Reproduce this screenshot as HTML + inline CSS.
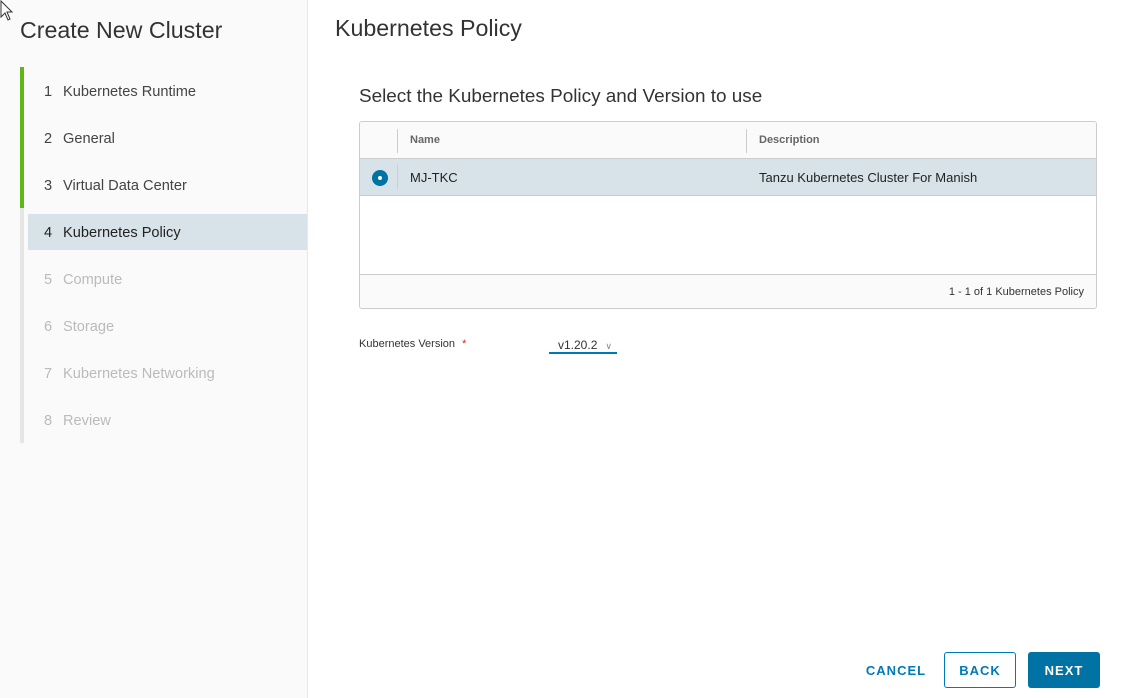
<!DOCTYPE html>
<html><head><style>
body{margin:0;width:1141px;height:698px;background:#fff;font-family:"Liberation Sans",sans-serif;position:relative;overflow:hidden;color:#333}
.side{position:absolute;left:0;top:0;width:307px;height:698px;background:#fafafa;border-right:1px solid #e8e8e8}
.abs{position:absolute}
.step{position:absolute;left:44px;font-size:14.6px;color:#444}
.step b{font-weight:normal;display:inline-block;width:19px}
.dis{color:#bbb}
.btn{position:absolute;top:652px;height:36px;font-size:13px;letter-spacing:1px;font-weight:bold;display:flex;align-items:center;justify-content:center;box-sizing:border-box}
</style></head><body>
<div class="side">
<svg class="abs" style="left:0;top:0" width="14" height="22" viewBox="0 0 14 22"><path d="M1 1 L1 17 L5 13 L8 20 L10 19 L7 12 L12 12 Z" fill="#fff" stroke="#333" stroke-width="1"/></svg>
<div class="abs" style="left:20px;top:17px;font-size:23.2px;color:#333">Create New Cluster</div>
<div class="abs" style="left:20px;top:67px;width:4px;height:141px;background:#5eb715"></div>
<div class="abs" style="left:20px;top:208px;width:4px;height:235px;background:#e5e5e5"></div>
<div class="abs" style="left:28px;top:214px;width:279px;height:36px;background:#d8e3e9"></div>
<div class="step" style="top:84px"><b>1</b>Kubernetes Runtime</div>
<div class="step" style="top:131px"><b>2</b>General</div>
<div class="step" style="top:178px"><b>3</b>Virtual Data Center</div>
<div class="step" style="top:225px;color:#222"><b>4</b>Kubernetes Policy</div>
<div class="step dis" style="top:272px"><b>5</b>Compute</div>
<div class="step dis" style="top:319px"><b>6</b>Storage</div>
<div class="step dis" style="top:366px"><b>7</b>Kubernetes Networking</div>
<div class="step dis" style="top:413px"><b>8</b>Review</div>
</div>
<div class="abs" style="left:335px;top:15px;font-size:23.2px;color:#333">Kubernetes Policy</div>
<div class="abs" style="left:359px;top:86px;font-size:18.9px;color:#333">Select the Kubernetes Policy and Version to use</div>
<div class="abs" style="left:359px;top:121px;width:736px;height:186px;border:1px solid #ccc;border-radius:3px;overflow:hidden">
 <div class="abs" style="left:0;top:0;width:736px;height:36px;background:#fafafa;border-bottom:1px solid #ccc"></div>
 <div class="abs" style="left:37px;top:7px;width:1px;height:24px;background:#ccc"></div>
 <div class="abs" style="left:386px;top:7px;width:1px;height:24px;background:#ccc"></div>
 <div class="abs" style="left:50px;top:12px;font-size:11px;font-weight:bold;color:#666">Name</div>
 <div class="abs" style="left:399px;top:12px;font-size:11px;font-weight:bold;color:#666">Description</div>
 <div class="abs" style="left:0;top:37px;width:736px;height:36px;background:#d8e3e9;border-bottom:1px solid #ccc"></div>
 <div class="abs" style="left:12px;top:48px;width:16px;height:16px;border-radius:50%;background:#0072a3"></div>
 <div class="abs" style="left:18px;top:54px;width:4px;height:4px;border-radius:50%;background:#fff"></div>
 <div class="abs" style="left:37px;top:43px;width:1px;height:24px;background:#c8d0d5"></div>
 <div class="abs" style="left:50px;top:48px;font-size:13px;color:#222">MJ-TKC</div>
 <div class="abs" style="left:399px;top:48px;font-size:13px;color:#222">Tanzu Kubernetes Cluster For Manish</div>
 <div class="abs" style="left:0;top:152px;width:736px;height:34px;background:#fafafa;border-top:1px solid #ccc"></div>
 <div class="abs" style="right:12px;top:164px;font-size:11px;color:#333">1 - 1 of 1 Kubernetes Policy</div>
</div>
<div class="abs" style="left:359px;top:338px;font-size:11px;color:#333">Kubernetes Version <span style="color:#e12200;margin-left:4px">*</span></div>
<div class="abs" style="left:549px;top:338px;width:68px;height:14px;border-bottom:2px solid #0079b8;font-size:12px;color:#333"><span style="margin-left:9px">v1.20.2</span><span style="margin-left:8px;color:#888;font-size:9px">&#8744;</span></div>
<div class="btn" style="left:860px;width:72px;color:#0079b8">CANCEL</div>
<div class="btn" style="left:944px;width:72px;border:1px solid #0079b8;border-radius:3px;color:#0079b8">BACK</div>
<div class="btn" style="left:1028px;width:72px;background:#0072a3;border-radius:3px;color:#fff">NEXT</div>
</body></html>
